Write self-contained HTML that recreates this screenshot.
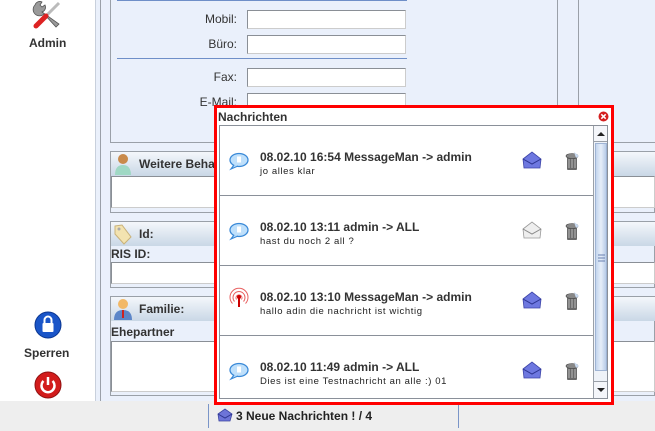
<!DOCTYPE html>
<html><head><meta charset="utf-8"><style>
*{margin:0;padding:0;box-sizing:border-box}
body{width:655px;height:431px;overflow:hidden;position:relative;background:#fff;font-family:"Liberation Sans",sans-serif;font-size:12px;color:#333}
.a{position:absolute}
.lbl{position:absolute;width:100px;text-align:right;font-size:12px;color:#333}
.in{position:absolute;background:#fff;border:1px solid #8a8f96;border-right-color:#ccc;border-bottom-color:#ccc}
.hdr{position:absolute;height:24px;background:linear-gradient(#f4f7fb,#c9d7e6);font-weight:bold;font-size:12px;line-height:24px;padding-left:28px;color:#333}
.pan{position:absolute;border:1px solid #9aa0a8}
.row{position:absolute;left:0;width:373px;height:70px;border-bottom:1px solid #8a9099}
.t{position:absolute;left:40px;top:24px;font-weight:bold;font-size:12px;color:#333}
.m{position:absolute;left:40px;top:40px;font-size:9.5px;letter-spacing:0.6px;color:#222}
</style></head><body>
<div class="a" style="left:95px;top:0;width:560px;height:401px;background:#eaf0fb"></div>
<div class="a" style="left:95px;top:0;width:1px;height:401px;background:#c8d0dc"></div>
<div class="a" style="left:100px;top:0;width:1px;height:401px;background:#9aa0a8"></div>
<div class="a" style="left:110px;top:0;width:1px;height:143px;background:#9aa0a8"></div>
<div class="a" style="left:110px;top:142px;width:545px;height:1px;background:#9aa0a8"></div>
<div class="a" style="left:557px;top:0;width:1px;height:143px;background:#9aa0a8"></div>
<div class="a" style="left:578px;top:0;width:1px;height:143px;background:#9aa0a8"></div>
<div class="a" style="left:117px;top:0;width:290px;height:1px;background:#6f8fc8"></div>
<div class="a" style="left:117px;top:58px;width:290px;height:1px;background:#6f8fc8"></div>
<div class="lbl" style="left:137px;top:12px">Mobil:</div>
<div class="lbl" style="left:137px;top:37px">Büro:</div>
<div class="lbl" style="left:137px;top:70px">Fax:</div>
<div class="lbl" style="left:137px;top:95px">E-Mail:</div>
<div class="in" style="left:247px;top:10px;width:159px;height:19px"></div>
<div class="in" style="left:247px;top:35px;width:159px;height:19px"></div>
<div class="in" style="left:247px;top:68px;width:159px;height:19px"></div>
<div class="in" style="left:247px;top:93px;width:159px;height:19px"></div>
<div class="pan" style="left:110px;top:151px;width:545px;height:62px"></div>
<div class="hdr" style="left:111px;top:152px;width:544px">Weitere Behandler</div>
<div class="in" style="left:111px;top:176px;width:544px;height:32px"></div>
<div class="a" style="left:114px;top:153px;width:18px;height:22px"><svg width="18" height="22"><circle cx="9" cy="6" r="5" fill="#c98a4a"/><path d="M1 22 Q1 12 9 12 Q17 12 17 22Z" fill="#9fd8c4"/></svg></div>
<div class="pan" style="left:110px;top:221px;width:545px;height:67px"></div>
<div class="hdr" style="left:111px;top:222px;width:544px">Id:</div>
<div class="a" style="left:112px;top:223px"><svg width="20" height="22"><path d="M3 3 L10 2 L19 14 L12 21 L3 11Z" fill="#f3e3b0" stroke="#c9b27a"/><circle cx="7" cy="6" r="1.5" fill="#aaa"/></svg></div>
<div class="a" style="left:111px;top:247px;font-weight:bold">RIS ID:</div>
<div class="in" style="left:111px;top:262px;width:544px;height:22px"></div>
<div class="pan" style="left:110px;top:296px;width:545px;height:100px"></div>
<div class="hdr" style="left:111px;top:297px;width:544px">Familie:</div>
<div class="a" style="left:113px;top:298px"><svg width="20" height="22"><circle cx="10" cy="6" r="5" fill="#f2b866"/><path d="M1 22 Q1 12 10 12 Q19 12 19 22Z" fill="#5c86c8"/><path d="M9 12 L11 12 L11 20 L9 20Z" fill="#c22"/></svg></div>
<div class="a" style="left:111px;top:325px;font-weight:bold">Ehepartner</div>
<div class="in" style="left:111px;top:341px;width:544px;height:51px"></div>
<div class="a" style="left:32px;top:0"><svg width="30" height="30"><path d="M3 5 a5 5 0 0 1 7 -3 l-2 3 2 2 3 -2 a5 5 0 0 1 -3 7 L27 24 L24 27 L12 14 a5 5 0 0 1 -9 -9Z" fill="#9a9a9a" stroke="#555" stroke-width="0.8"/><path d="M27 3 L15 15" stroke="#bbb" stroke-width="3"/><path d="M14 16 L4 26" stroke="#d22" stroke-width="5" stroke-linecap="round"/></svg></div>
<div class="a" style="left:29px;top:36px;font-weight:bold">Admin</div>
<div class="a" style="left:34px;top:311px"><svg width="28" height="28"><circle cx="14" cy="14" r="13" fill="#1a55c8" stroke="#0a3590"/><rect x="8.5" y="12" width="11" height="9" fill="#fff" rx="1"/><path d="M10.5 12 V9 a3.5 3.5 0 0 1 7 0 V12" stroke="#fff" stroke-width="2" fill="none"/></svg></div>
<div class="a" style="left:24px;top:346px;font-weight:bold">Sperren</div>
<div class="a" style="left:34px;top:371px"><svg width="28" height="28"><circle cx="14" cy="14" r="13" fill="#d21c1c" stroke="#901010"/><path d="M9.5 10 a6.5 6.5 0 1 0 9 0" stroke="#fff" stroke-width="2.5" fill="none"/><path d="M14 6 V14" stroke="#fff" stroke-width="2.5"/></svg></div>
<div class="a" style="left:0;top:401px;width:655px;height:30px;background:#eeeeee"></div>
<div class="a" style="left:208px;top:404px;width:1px;height:24px;background:#7a95c8"></div>
<div class="a" style="left:458px;top:404px;width:1px;height:24px;background:#7a95c8"></div>
<div class="a" style="left:217px;top:408px"><svg width="16" height="14"><path d="M1 6 L8 1 L15 6 L13 13 L2 13Z" fill="#6d74d8" stroke="#3c44a0" stroke-width="0.8"/><path d="M1 6 L8 10 L15 6" stroke="#2d3590" fill="none"/></svg></div>
<div class="a" style="left:236px;top:409px;font-weight:bold;color:#222">3 Neue Nachrichten ! / 4</div>
<div class="a" style="left:214px;top:105px;width:400px;height:300px;border:3px solid #f00;background:#fff"></div>
<div class="a" style="left:218px;top:110px;font-weight:bold;color:#333">Nachrichten</div>
<div class="a" style="left:598px;top:111px"><svg width="11" height="11"><circle cx="5.5" cy="5.5" r="5" fill="#d42020"/><path d="M3.3 3.3 L7.7 7.7 M7.7 3.3 L3.3 7.7" stroke="#fff" stroke-width="1.5"/></svg></div>
<div class="a" style="left:219px;top:125px;width:389px;height:274px;border:1px solid #8a9099;overflow:hidden">
 <div class="row" style="top:0"><div class="t">08.02.10 16:54 MessageMan -&gt; admin</div><div class="m">jo alles klar</div></div>
 <div class="row" style="top:70px"><div class="t">08.02.10 13:11 admin -&gt; ALL</div><div class="m">hast du noch 2 all ?</div></div>
 <div class="row" style="top:140px"><div class="t">08.02.10 13:10 MessageMan -&gt; admin</div><div class="m">hallo adin die nachricht ist wichtig</div></div>
 <div class="row" style="top:210px;border:none"><div class="t">08.02.10 11:49 admin -&gt; ALL</div><div class="m">Dies ist eine Testnachricht an alle :) 01</div></div>
 <div class="a" style="left:373px;top:0;width:15px;height:272px;background:#eef2f8;border-left:1px solid #9aa0a8">
  <div class="a" style="left:0;top:0;width:14px;height:16px;border-bottom:1px solid #9aa0a8;background:#f4f6fa"><svg width="14" height="16"><path d="M3 10 L7 6 L11 10Z" fill="#222"/></svg></div>
  <div class="a" style="left:1px;top:17px;width:12px;height:228px;background:linear-gradient(90deg,#c4d6ee,#e6eef9,#b8cce8);border:1px solid #9fb4d4"><svg width="10" height="228"><path d="M2 111 H9 M2 114 H9 M2 117 H9" stroke="#6880b0"/></svg></div>
  <div class="a" style="left:0;top:255px;width:14px;height:17px;border-top:1px solid #9aa0a8;background:#f4f6fa"><svg width="14" height="16"><path d="M3 6 L7 10 L11 6Z" fill="#222"/></svg></div>
 </div>
</div>
<svg class="a" style="left:0;top:0" width="655" height="431">
 <defs>
  <g id="bub"><ellipse cx="0" cy="0" rx="9" ry="6.5" fill="#bfe0fb" stroke="#3b8ad8" stroke-width="1.3"/><path d="M-5 5 L-8 9 L-1 6" fill="#bfe0fb" stroke="#3b8ad8" stroke-width="1.2"/><rect x="-2" y="-3.5" width="4" height="6" fill="#fff"/></g>
  <g id="env"><path d="M-9 -1 L0 -8 L9 -1 L8 8 L-8 8Z" fill="#6e78e0" stroke="#3c44a8" stroke-width="0.8"/><path d="M-9 -1 L0 4 L9 -1" stroke="#2c3490" fill="none"/></g>
  <g id="envg"><path d="M-9 -1 L0 -8 L9 -1 L8 8 L-8 8Z" fill="#eee" stroke="#999" stroke-width="0.8"/><path d="M-9 -1 L0 4 L9 -1" stroke="#888" fill="none"/></g>
  <g id="trash"><rect x="-5" y="-4" width="10" height="13" fill="#6a6a6a" rx="1"/><path d="M-3 -2 V7 M0 -2 V7 M3 -2 V7" stroke="#bbb"/><ellipse cx="0" cy="-5" rx="6" ry="2.5" fill="#888" stroke="#444" stroke-width="0.6"/><path d="M2 -9 L7 -5 L4 -3Z" fill="#c9daf0"/></g>
 </defs>
 <use href="#bub" x="239" y="160"/><use href="#env" x="532" y="160"/><use href="#trash" x="572" y="161"/>
 <use href="#bub" x="239" y="230"/><use href="#envg" x="532" y="230"/><use href="#trash" x="572" y="231"/>
 <use href="#env" x="532" y="300"/><use href="#trash" x="572" y="301"/>
 <use href="#bub" x="239" y="370"/><use href="#env" x="532" y="370"/><use href="#trash" x="572" y="371"/>
 <g transform="translate(239,298)" fill="none" stroke="#e86060" stroke-width="1"><path d="M-2.5 1.5 a3 3 0 1 1 5 0"/><path d="M-4.5 3.5 a6 6 0 1 1 9 0"/><path d="M-6.5 5.5 a9 9 0 1 1 13 0"/><circle cx="0" cy="-1" r="2" fill="#c00" stroke="none"/><path d="M0 0 V9" stroke="#c00" stroke-width="2"/></g>
</svg>
</body></html>
